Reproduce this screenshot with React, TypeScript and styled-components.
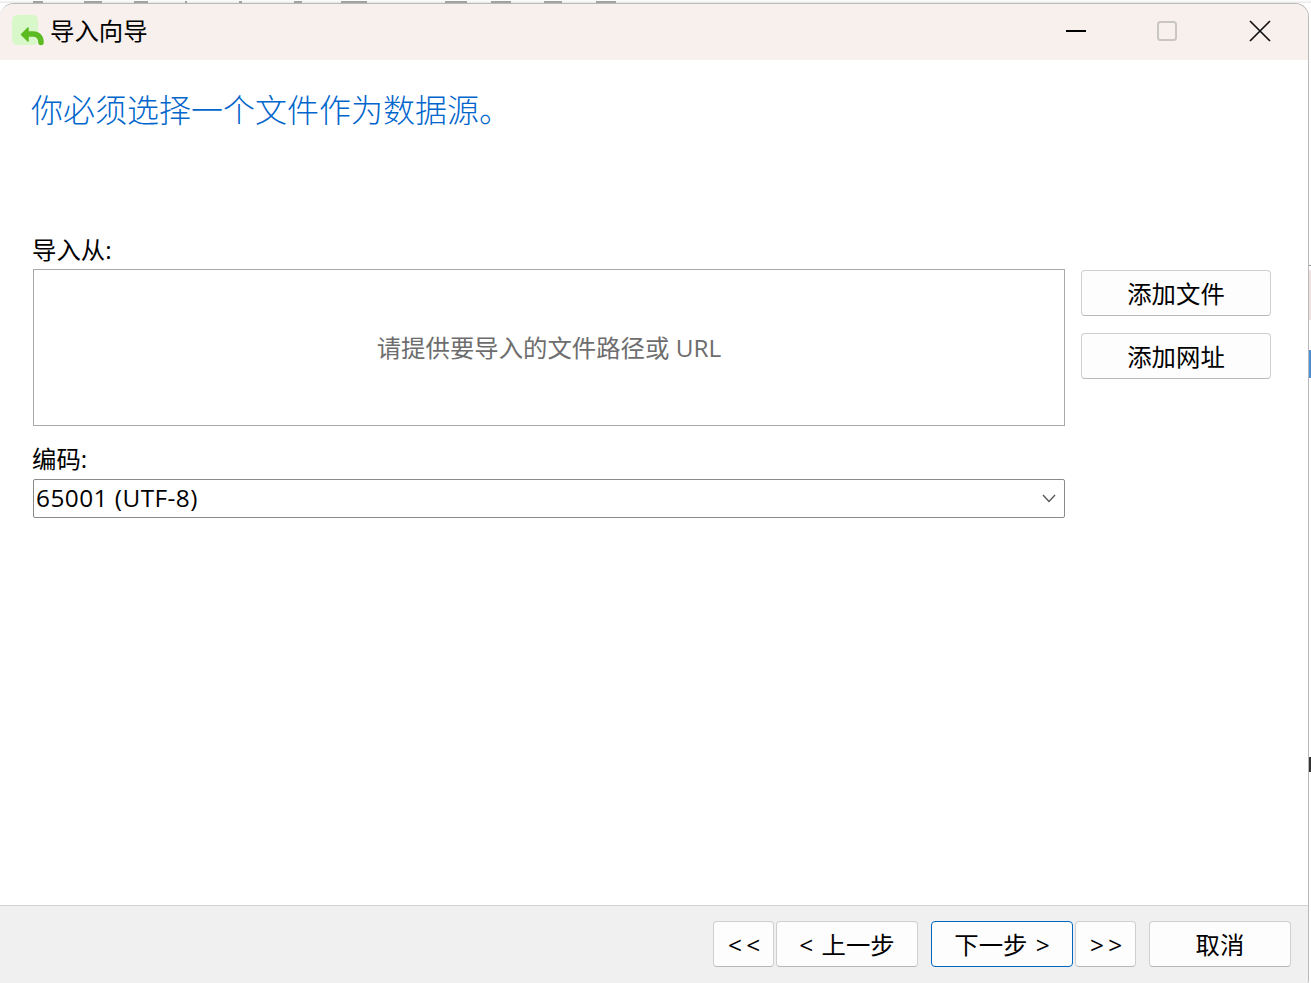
import React from "react";
import styled, { createGlobalStyle } from "styled-components";

const Global = createGlobalStyle`
  html, body { margin: 0; padding: 0; background: #fff; }
  * { box-sizing: border-box; }
`;

const UI = `"Open Sans", "Noto Sans CJK SC", sans-serif`;

const Page = styled.div`
  width: 1311px;
  height: 983px;
  overflow: hidden;
  background: #fff;
  font-family: ${UI};
  font-size: 24.4px;
  color: #000;
`;

/* Slivers of the application behind the dialog, along the top edge */
const BackdropTop = styled.div`
  height: 3px;
  display: flex;
  align-items: flex-end;
  background: linear-gradient(#fff, #e8e8e8);
`;

const Sliver = styled.div<{ $w: number; $before: number }>`
  width: ${(p) => p.$w}px;
  margin-left: ${(p) => p.$before}px;
  height: 2px;
  background: #a2a2a2;
`;

const Stage = styled.div`
  display: flex;
  align-items: flex-start;
`;

const Window = styled.div`
  width: 1309px;
  height: 990px;
  flex: none;
  display: flex;
  flex-direction: column;
  background: #fff;
  border-radius: 14px;
  border: 1px solid #b9b9b9;
  border-left: none;
  overflow: hidden;
`;

/* Slivers of the application behind the dialog, along the right edge */
const BackdropRight = styled.div`
  width: 2px;
  flex: none;
  display: flex;
  flex-direction: column;
`;

const EdgeMark = styled.div<{ $h: number; $before: number; $color: string }>`
  height: ${(p) => p.$h}px;
  margin-top: ${(p) => p.$before}px;
  background: ${(p) => p.$color};
`;

const TitleBar = styled.div`
  height: 56px;
  flex: none;
  display: flex;
  align-items: center;
  background: #f7f0ed;
  padding: 0 0 2px 12px;
`;

const AppIcon = styled.svg`
  flex: none;
  margin-top: 2px;
`;

const TitleText = styled.div`
  margin-left: 4px;
  line-height: 32px;
  flex: 1;
`;

const WinButton = styled.div<{ $w: number }>`
  width: ${(p) => p.$w}px;
  height: 54px;
  display: flex;
  align-items: center;
  justify-content: center;
`;

const Body = styled.div`
  flex: 1;
  padding: 27px 0 0 31px;
`;

const Heading = styled.div`
  font-size: 32px;
  line-height: 42px;
  color: #0066cc;
  font-family: "Noto Sans CJK SC", sans-serif;
  font-weight: 300;
  margin-bottom: 105px;
`;

const Label = styled.div`
  line-height: 32px;
  height: 32px;
  margin: 0 0 3px 1px;
`;

const SourceRow = styled.div`
  display: flex;
  gap: 16px;
  margin-left: 2px;
`;

const DropBox = styled.div`
  width: 1032px;
  height: 157px;
  border: 1px solid #a9a9a9;
  display: flex;
  align-items: center;
  justify-content: center;
  padding-bottom: 2px;
  color: #6d6d6d;
`;

const SideButtons = styled.div`
  display: flex;
  flex-direction: column;
  gap: 17px;
  padding-top: 1px;
`;

const Button = styled.button<{ $w: number; $primary?: boolean }>`
  width: ${(p) => p.$w}px;
  height: 46px;
  padding: 2px 0 0;
  font: inherit;
  line-height: 32px;
  color: #000;
  background: #fdfdfd;
  border: 1px solid ${(p) => (p.$primary ? "#0067c0" : "#cfcfcf")};
  border-bottom-color: ${(p) => (p.$primary ? "#0067c0" : "#b8b8b8")};
  border-radius: 4px;
  white-space: pre;
`;

const StepButton = styled(Button)`
  word-spacing: 2px;
`;

const JumpButton = styled(Button)`
  letter-spacing: -1px;
`;

const EncodingLabel = styled(Label)`
  margin-top: 17px;
  margin-bottom: 5px;
  height: 31px;
`;

const Select = styled.div`
  width: 1032px;
  height: 39px;
  margin-left: 2px;
  border: 1px solid #8a8a8a;
  border-radius: 2px;
  display: flex;
  align-items: center;
  justify-content: space-between;
  padding: 0 8px 2px 2px;
  letter-spacing: 0.45px;
`;

const Chevron = styled.svg`
  margin-top: 2px;
`;

const Footer = styled.div`
  height: 87px;
  flex: none;
  background: #f0f0f0;
  border-top: 1px solid #d2d2d2;
  padding: 15px 0 0 713px;
  display: flex;
  align-items: flex-start;
`;

const Gap = styled.div<{ $w: number }>`
  width: ${(p) => p.$w}px;
  flex: none;
`;

export default function App() {
  return (
    <Page>
      <Global />
      <BackdropTop>
        <Sliver $before={33} $w={10} />
        <Sliver $before={41} $w={18} />
        <Sliver $before={32} $w={14} />
        <Sliver $before={37} $w={2} />
        <Sliver $before={52} $w={3} />
        <Sliver $before={52} $w={8} />
        <Sliver $before={39} $w={26} />
        <Sliver $before={78} $w={22} />
        <Sliver $before={24} $w={20} />
        <Sliver $before={33} $w={18} />
        <Sliver $before={34} $w={20} />
      </BackdropTop>
      <Stage>
        <Window>
          <TitleBar>
            <AppIcon width="34" height="34" viewBox="0 0 34 34">
              <rect x="0" y="0" width="26" height="30" rx="5" fill="#d9f8c9" />
              <path d="M15 19 H21 C26 19 29 22 29 27.5" fill="none" stroke="#5cba22" strokeWidth="5.5" strokeLinecap="round" />
              <path d="M16 13 L16 26 L9.5 19.5 Z" fill="#5cba22" stroke="#5cba22" strokeWidth="1.5" strokeLinejoin="round" />
            </AppIcon>
            <TitleText>导入向导</TitleText>
            <WinButton $w={92}>
              <svg width="22" height="4" viewBox="0 0 22 4"><path d="M1 2 H21" stroke="#000" strokeWidth="2" /></svg>
            </WinButton>
            <WinButton $w={90}>
              <svg width="20" height="20" viewBox="0 0 20 20"><rect x="1" y="1" width="18" height="18" rx="2.5" fill="none" stroke="#c9c5c3" strokeWidth="2" /></svg>
            </WinButton>
            <WinButton $w={96}>
              <svg width="22" height="22" viewBox="0 0 22 22"><path d="M1 1 L21 21 M21 1 L1 21" stroke="#111" strokeWidth="1.7" /></svg>
            </WinButton>
          </TitleBar>
          <Body>
            <Heading>你必须选择一个文件作为数据源。</Heading>
            <Label>导入从:</Label>
            <SourceRow>
              <DropBox>请提供要导入的文件路径或 URL</DropBox>
              <SideButtons>
                <Button $w={190}>添加文件</Button>
                <Button $w={190}>添加网址</Button>
              </SideButtons>
            </SourceRow>
            <EncodingLabel>编码:</EncodingLabel>
            <Select>
              <span>65001 (UTF-8)</span>
              <Chevron width="14" height="9" viewBox="0 0 14 9"><path d="M1 1 L7 7.5 L13 1" fill="none" stroke="#555" strokeWidth="1.3" /></Chevron>
            </Select>
          </Body>
          <Footer>
            <JumpButton $w={61}>{"< <"}</JumpButton>
            <Gap $w={2} />
            <StepButton $w={142}>{"< 上一步"}</StepButton>
            <Gap $w={13} />
            <StepButton $w={142} $primary>{"下一步 >"}</StepButton>
            <Gap $w={2} />
            <JumpButton $w={61}>{"> >"}</JumpButton>
            <Gap $w={13} />
            <Button $w={142}>取消</Button>
          </Footer>
        </Window>
        <BackdropRight>
          <EdgeMark $before={262} $h={1} $color="#8f8f8f" />
          <EdgeMark $before={4} $h={50} $color="#efe3e1" />
          <EdgeMark $before={30} $h={28} $color="#4a90d9" />
          <EdgeMark $before={379} $h={15} $color="#333" />
        </BackdropRight>
      </Stage>
    </Page>
  );
}
